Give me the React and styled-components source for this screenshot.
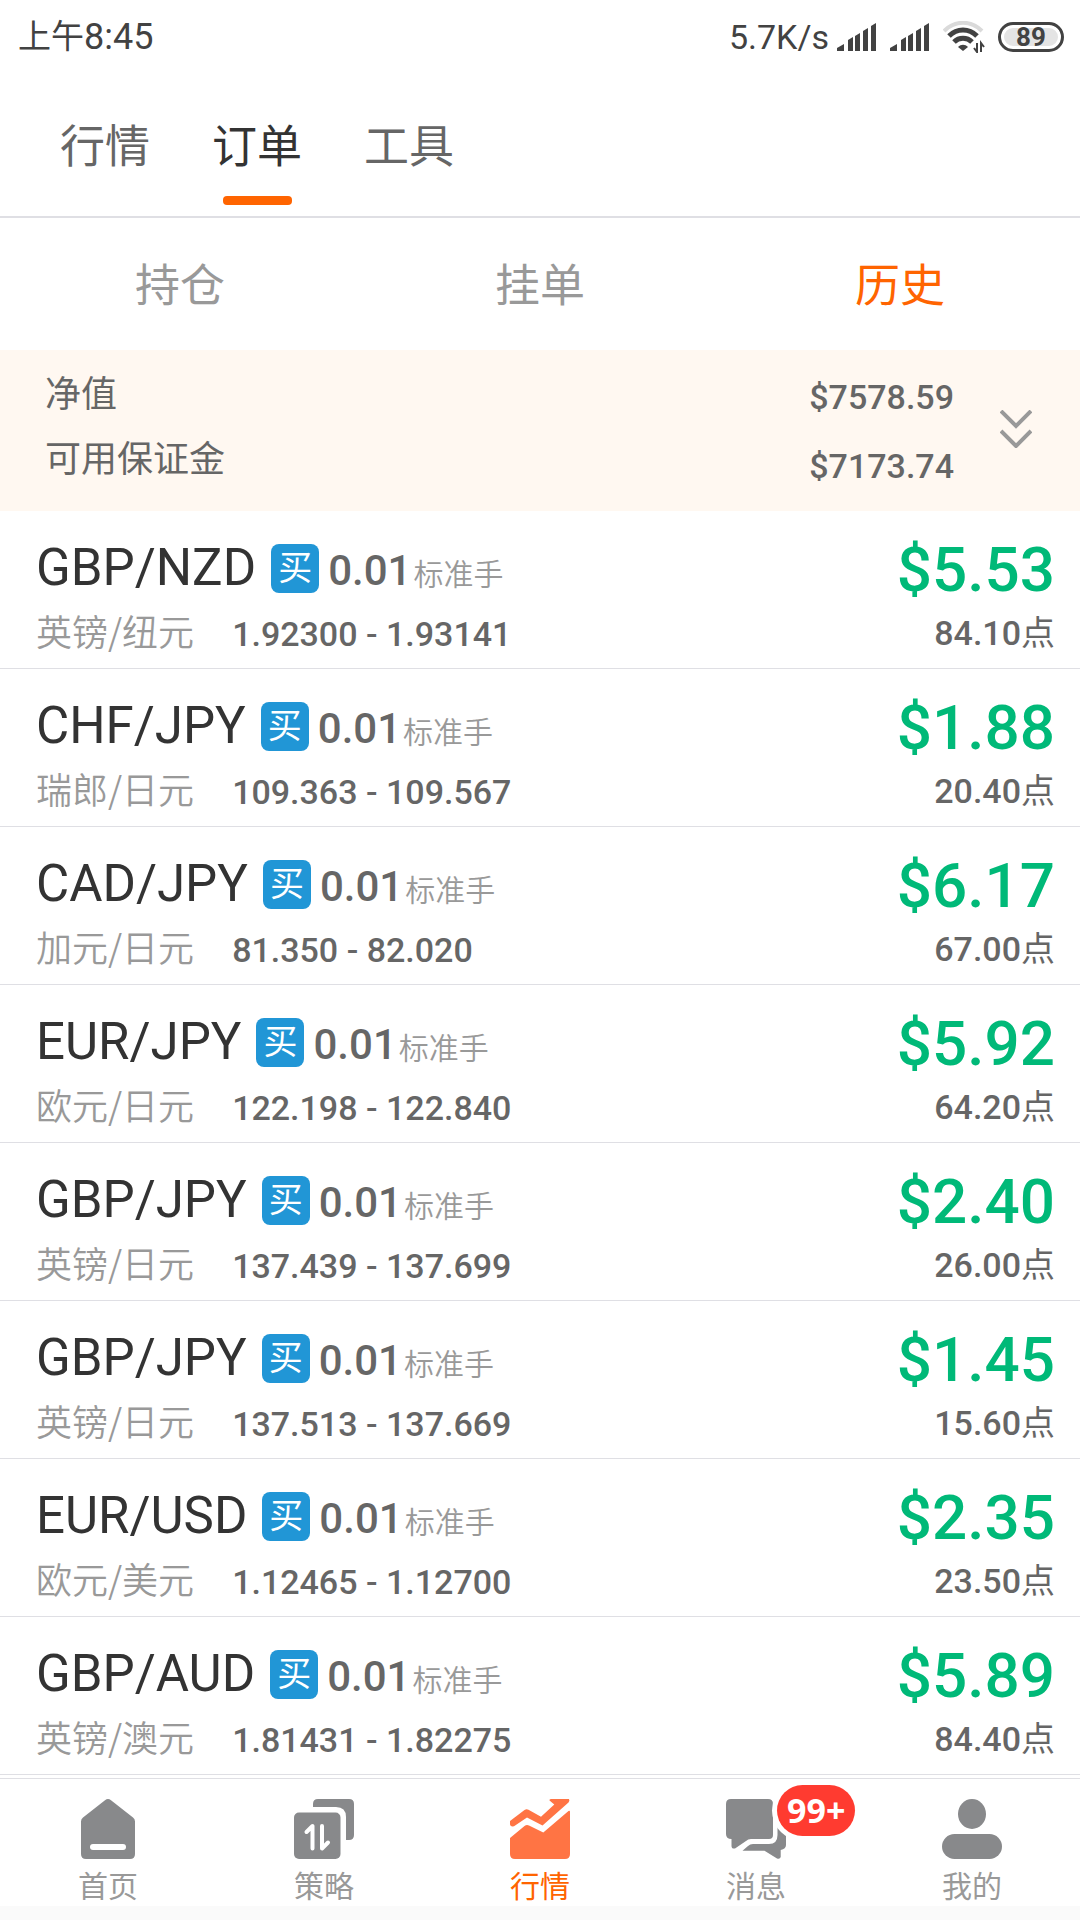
import React from 'react';
import styled, { createGlobalStyle } from 'styled-components';

const orders = [
  { pair: 'GBP/NZD', name: '英镑/纽元', open: '1.92300', close: '1.93141', profit: '$5.53', points: '84.10' },
  { pair: 'CHF/JPY', name: '瑞郎/日元', open: '109.363', close: '109.567', profit: '$1.88', points: '20.40' },
  { pair: 'CAD/JPY', name: '加元/日元', open: '81.350', close: '82.020', profit: '$6.17', points: '67.00' },
  { pair: 'EUR/JPY', name: '欧元/日元', open: '122.198', close: '122.840', profit: '$5.92', points: '64.20' },
  { pair: 'GBP/JPY', name: '英镑/日元', open: '137.439', close: '137.699', profit: '$2.40', points: '26.00' },
  { pair: 'GBP/JPY', name: '英镑/日元', open: '137.513', close: '137.669', profit: '$1.45', points: '15.60' },
  { pair: 'EUR/USD', name: '欧元/美元', open: '1.12465', close: '1.12700', profit: '$2.35', points: '23.50' },
  { pair: 'GBP/AUD', name: '英镑/澳元', open: '1.81431', close: '1.82275', profit: '$5.89', points: '84.40' },
];

const SignalIcon = () => (
  <svg width="40" height="28" viewBox="0 0 40 28" fill="#424242">
    <path d="M0 28v-3l7-4v7z" />
    <path d="M11 28V17l5-3v14z" />
    <path d="M18 28V13l5-3v18z" />
    <path d="M26 28V8l5-3v23z" />
    <path d="M34 28V3l5-3v28z" />
  </svg>
);

const WifiIcon = () => (
  <svg width="42" height="32" viewBox="0 0 42 32" fill="none">
    <path d="M1 10C12 -1 28 -1 39 10" stroke="#dadada" strokeWidth="4" />
    <path d="M6 15C14 7 26 7 34 15" stroke="#424242" strokeWidth="5" />
    <path d="M11 21C16 16 24 16 29 21" stroke="#424242" strokeWidth="5" />
    <path d="M15 26c3-3 7-3 10 0l-5 4z" fill="#424242" />
    <path d="M34 22v9l-3-4M38 31v-9l3 4" stroke="#424242" strokeWidth="2" />
  </svg>
);

const ChevronsIcon = () => (
  <svg width="32" height="38" viewBox="0 0 32 38" fill="none" stroke="#999" strokeWidth="4">
    <path d="M1 1l15 15L31 1M1 21l15 15 15-15" />
  </svg>
);

const HomeIcon = () => (
  <svg width="60" height="60" viewBox="0 0 60 60">
    <path
      d="M27 1.2Q30-1 33 1.2L55 18.500Q57 20 57 22.500V55Q57 60 52 60H8Q3 60 3 55V22.500Q3 20 5 18.500Z"
      fill="#88898b"
    />
    <rect x="12" y="45" width="36" height="6" rx="3" fill="#fff" />
  </svg>
);

const StrategyIcon = () => (
  <svg width="60" height="60" viewBox="0 0 60 60" fill="#88898b">
    <rect y="13.500" width="46.500" height="46.500" rx="5" />
    <path d="M19 8V5Q19 0 24 0H55Q60 0 60 5V36Q60 41 55 41H52V18Q52 8 42 8Z" />
    <path
      d="M12.500 33L18.500 27V49.500M28 27V49.500L34 43.500"
      fill="none"
      stroke="#fff"
      strokeWidth="4"
      strokeLinecap="round"
      strokeLinejoin="round"
    />
  </svg>
);

const MarketIcon = () => (
  <svg width="60" height="60" viewBox="0 0 60 60" fill="#ff7444">
    <path d="M0 39L14.500 27Q16.700 25.300 19 26.500L33.300 33.500L58.500 12Q60 11 60 13V55Q60 60 55 60H5Q0 60 0 55Z" />
    <path d="M0 22L14.500 11Q16.500 9.600 18.500 10.800L31 17.700L44.300 5.500L39.500 1.500Q39 0 41 0H59Q60 1.500 58.500 3.500L32.500 26.500L17 18.500L4 27.300Q0 28 0 25Z" />
  </svg>
);

const MessageIcon = () => (
  <svg width="60" height="60" viewBox="0 0 60 60" fill="#88898b">
    <path d="M5 0H42Q47 0 47 5V36Q47 40 43 40H25Q22 40 20 42L9 49.500Q5.500 50 5.500 47V40Q0 40 0 35V5Q0 0 5 0Z" />
    <path d="M51.500 20H55Q60 20 60 25V46Q60 50 54.700 51V58Q54 60.500 51 59.500L38.500 51.700H16.500L22 47Q24 45 27 45H43Q51.500 45 51.500 36Z" />
  </svg>
);

const MineIcon = () => (
  <svg width="60" height="60" viewBox="0 0 60 60" fill="#88898b">
    <ellipse cx="30" cy="15" rx="14" ry="15" />
    <rect y="35" width="60" height="25" rx="12.500" />
  </svg>
);

const navItems = [
  { label: '首页', Icon: HomeIcon },
  { label: '策略', Icon: StrategyIcon },
  { label: '行情', Icon: MarketIcon, active: true },
  { label: '消息', Icon: MessageIcon, badge: '99+' },
  { label: '我的', Icon: MineIcon },
];

const App = () => {
  return (
    <>
      <GlobalStyle />
      <StatusBar>
        <Clock>
          <ClockPeriod>上午</ClockPeriod>8:45
        </Clock>
        <StatusIcons>
          <NetSpeed>5.7K/s</NetSpeed>
          <SignalIcon />
          <SignalIcon />
          <WifiIcon />
          <Battery>89</Battery>
        </StatusIcons>
      </StatusBar>

      <Tabs>
        <Tab>行情</Tab>
        <Tab $active>订单</Tab>
        <Tab>工具</Tab>
      </Tabs>

      <SubTabs>
        <SubTab>持仓</SubTab>
        <SubTab>挂单</SubTab>
        <SubTab $active>历史</SubTab>
      </SubTabs>

      <Summary>
        <SummaryLabels>
          <span>净值</span>
          <span>可用保证金</span>
        </SummaryLabels>
        <SummaryValues>
          <span>$7578.59</span>
          <span>$7173.74</span>
        </SummaryValues>
        <ExpandButton aria-label="展开">
          <ChevronsIcon />
        </ExpandButton>
      </Summary>

      <OrderList>
        {orders.map((order, i) => (
          <OrderRow key={i}>
            <div>
              <OrderTitle>
                <Pair>{order.pair}</Pair>
                <Side>买</Side>
                <Lots>0.01</Lots>
                <Unit>标准手</Unit>
              </OrderTitle>
              <OrderDetail>
                <PairName>{order.name}</PairName>
                <Prices>
                  {order.open} - {order.close}
                </Prices>
              </OrderDetail>
            </div>
            <OrderResult>
              <Profit>{order.profit}</Profit>
              <Points>
                {order.points}
                <PointsUnit>点</PointsUnit>
              </Points>
            </OrderResult>
          </OrderRow>
        ))}
      </OrderList>

      <BottomNav>
        {navItems.map(({ label, Icon, active, badge }) => (
          <NavItem key={label} href="#" $active={active}>
            <NavIcon>
              <Icon />
              {badge && <Badge>{badge}</Badge>}
            </NavIcon>
            {label}
          </NavItem>
        ))}
      </BottomNav>
    </>
  );
};

const GlobalStyle = createGlobalStyle`
  * {
    box-sizing: border-box;
  }

  body {
    margin: 0;
    background: #fafafa;
    font-family: Roboto, 'Noto Sans CJK SC', sans-serif;
    color: #666;
  }

  button {
    padding: 0;
    border: 0;
    background: none;
    font: inherit;
    cursor: pointer;
  }

  svg {
    display: block;
    flex: none;
  }
`;

const StatusBar = styled.header`
  display: flex;
  align-items: center;
  justify-content: space-between;
  height: 74px;
  padding: 0 16px 0 18px;
  background: #fff;
  color: #424242;
  font-size: 36px;
`;

const Clock = styled.div`
  display: flex;
  align-items: center;
  line-height: 40px;
`;

const ClockPeriod = styled.span`
  font-size: 33px;
`;

const StatusIcons = styled.div`
  display: flex;
  align-items: center;
  gap: 13px;
`;

const NetSpeed = styled.span`
  margin-right: -5px;
  font-size: 34px;
`;

const Battery = styled.div`
  width: 66px;
  height: 30px;
  border: 3px solid #424242;
  border-radius: 15px;
  background: #e4e4e4;
  box-shadow: inset 0 0 0 3px #fff;
  font-size: 26px;
  font-weight: 700;
  line-height: 25px;
  text-align: center;
`;

const Tabs = styled.nav`
  display: flex;
  gap: 62px;
  height: 144px;
  padding: 0 60px;
  border-bottom: 2px solid #dfdfe4;
  background: #fff;
`;

const Tab = styled.button`
  display: flex;
  flex-direction: column;
  align-items: center;
  padding-top: 38px;
  color: ${(props) => (props.$active ? '#333' : '#666')};
  font-size: 45px;
  line-height: 72px;

  &::after {
    content: '';
    width: 69px;
    height: 9px;
    margin-top: 12px;
    border-radius: 4px;
    background: ${(props) => (props.$active ? '#ff6400' : 'transparent')};
  }
`;

const SubTabs = styled.nav`
  display: flex;
  height: 132px;
  background: #fff;
`;

const SubTab = styled.button`
  flex: 1;
  padding-bottom: 3px;
  color: ${(props) => (props.$active ? '#ff6400' : '#999')};
  font-size: 45px;
`;

const Summary = styled.section`
  display: flex;
  align-items: center;
  height: 161px;
  padding: 0 48px 0 45px;
  background: #fff8f1;
`;

const SummaryLabels = styled.div`
  display: flex;
  flex-direction: column;
  flex: 1;
  padding-bottom: 6px;
  font-size: 36px;
  line-height: 65px;
`;

const SummaryValues = styled.div`
  display: flex;
  flex-direction: column;
  padding-top: 2px;
  font-size: 34px;
  font-weight: 500;
  line-height: 69px;
`;

const ExpandButton = styled.button`
  margin-left: 46px;
  padding-bottom: 3px;
`;

const OrderList = styled.ul`
  margin: 0;
  padding: 0;
  background: #fff;
  list-style: none;
`;

const OrderRow = styled.li`
  display: flex;
  justify-content: space-between;
  height: 158px;
  padding: 27px 25px 0 36px;
  border-bottom: 1px solid #dfdfe4;
`;

const OrderTitle = styled.div`
  display: flex;
  align-items: baseline;
  height: 60px;
  line-height: 60px;
`;

const Pair = styled.span`
  color: #333;
  font-size: 51px;
`;

const Side = styled.span`
  align-self: center;
  width: 48px;
  height: 49px;
  margin: 0 9px 0 15px;
  border-radius: 8px;
  background: #2196d6;
  color: #fff;
  font-size: 34px;
  line-height: 48px;
  text-align: center;
`;

const Lots = styled.span`
  font-size: 42px;
  font-weight: 500;
`;

const Unit = styled.span`
  margin-left: 2px;
  color: #999;
  font-size: 30px;
  font-weight: 350;
`;

const OrderDetail = styled.div`
  display: flex;
  gap: 38px;
  align-items: baseline;
  line-height: 64px;
`;

const PairName = styled.span`
  color: #999;
  font-family: 'Noto Sans CJK SC', sans-serif;
  font-size: 36px;
  font-weight: 350;
`;

const Prices = styled.span`
  font-size: 34px;
  font-weight: 500;
`;

const OrderResult = styled.div`
  text-align: right;
`;

const Profit = styled.div`
  color: #00b978;
  font-size: 62px;
  font-weight: 500;
  line-height: 64px;
`;

const Points = styled.div`
  font-size: 34px;
  font-weight: 500;
  line-height: 62px;
`;

const PointsUnit = styled.span`
  font-weight: 400;
`;

const BottomNav = styled.nav`
  display: flex;
  height: 128px;
  margin-top: 3px;
  padding-top: 20px;
  border-top: 1px solid #dfdfe4;
  background: #fff;
  box-shadow: 0 -3px #fff;
`;

const NavItem = styled.a`
  display: flex;
  flex: 1;
  flex-direction: column;
  align-items: center;
  gap: 6px;
  color: ${(props) => (props.$active ? '#ff6400' : '#999')};
  font-size: 30px;
  line-height: 44px;
  text-decoration: none;
`;

const NavIcon = styled.span`
  position: relative;
`;

const Badge = styled.span`
  position: absolute;
  top: -14px;
  left: 51px;
  padding: 0 10px;
  border-radius: 26px;
  background: #ff3b30;
  box-shadow: 0 0 0 5px #fff;
  color: #fff;
  font-family: 'Noto Sans', sans-serif;
  font-size: 34px;
  font-weight: 700;
  line-height: 51px;
`;

export default App;
